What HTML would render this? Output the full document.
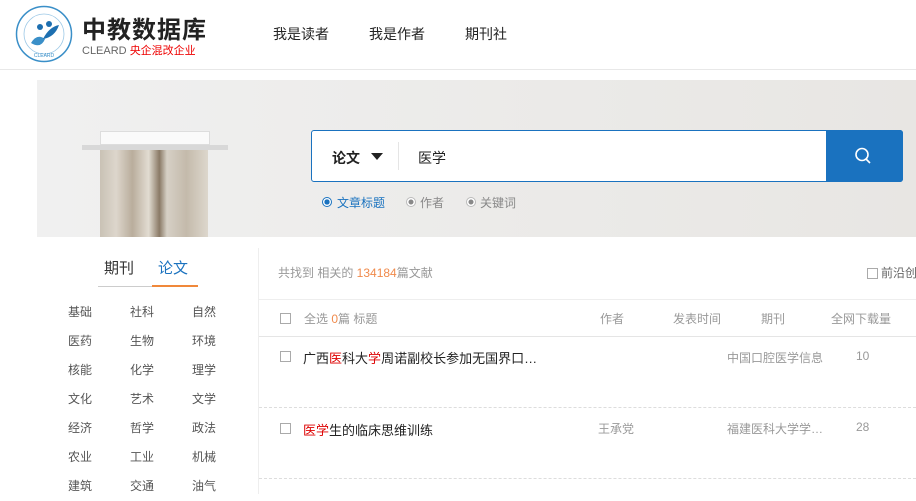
<!DOCTYPE html>
<html><head><meta charset="utf-8">
<style>
*{margin:0;padding:0;box-sizing:border-box}
body{width:916px;height:494px;overflow:hidden;background:#fff;font-family:"Liberation Sans","Noto Sans CJK SC",sans-serif;position:relative;color:#333}
.a{position:absolute;white-space:nowrap}
.cb{position:absolute;width:11px;height:11px;border:1px solid #aaa;background:#fff}
</style></head><body>
<svg class="a" style="left:15px;top:5px" width="58" height="58" viewBox="0 0 58 58">
<circle cx="29" cy="29" r="27.5" fill="#fff" stroke="#3a8fc8" stroke-width="1.5"/>
<circle cx="29" cy="29" r="20" fill="none" stroke="#9cc8e6" stroke-width="0.8"/>
<path d="M16 38 Q22 28 30 34 Q26 44 16 38Z" fill="#3a8fc8"/>
<path d="M28 34 Q34 22 44 20 Q40 32 28 34Z" fill="#1d6fb0"/>
<circle cx="25" cy="22" r="3" fill="#1d6fb0"/><circle cx="34" cy="19" r="3" fill="#1d6fb0"/>
<text x="29" y="52" font-size="5" fill="#3a8fc8" text-anchor="middle" font-family="Liberation Sans">CLEARD</text>
</svg>
<div class="a" style="left:82px;top:10px;font-size:24px;font-weight:bold;color:#222;letter-spacing:1px">中教数据库</div>
<div class="a" style="left:82px;top:42px;font-size:11px;color:#666">CLEARD <span style="color:#e00">央企混改企业</span></div>
<div class="a" style="left:273px;top:24px;font-size:14px;color:#222">我是读者</div>
<div class="a" style="left:369px;top:24px;font-size:14px;color:#222">我是作者</div>
<div class="a" style="left:465px;top:24px;font-size:14px;color:#222">期刊社</div>
<div class="a" style="left:0;top:69px;width:916px;height:1px;background:#e8e8e8"></div>
<div class="a" style="left:37px;top:80px;width:879px;height:157px;background:linear-gradient(90deg,#f0f0f0,#ebeae8 60%,#e8e6e3)"></div>
<div class="a" style="left:100px;top:131px;width:110px;height:14px;background:#fafafa;border:1px solid #ddd"></div>
<div class="a" style="left:82px;top:145px;width:146px;height:5px;background:#d8d8d8"></div>
<div class="a" style="left:100px;top:150px;width:108px;height:87px;background:linear-gradient(90deg,#c9c2b5,#ddd6cc 15%,#b9ad9c 30%,#e2dcd2 45%,#8a7a66 55%,#d6d0c6 62%,#c4baab 80%,#ddd7cd)"></div>
<div class="a" style="left:311px;top:130px;width:592px;height:52px;border:1px solid #1a72bf;border-radius:3px;background:#fff"></div>
<div class="a" style="left:826px;top:130px;width:77px;height:52px;background:#1a72bf;border-radius:0 3px 3px 0"></div>
<svg class="a" style="left:853px;top:146px" width="20" height="20" viewBox="0 0 20 20"><circle cx="9" cy="8.5" r="6" fill="none" stroke="#fff" stroke-width="1.6"/><path d="M13 13 L17 17" stroke="#fff" stroke-width="1.6"/></svg>
<div class="a" style="left:332px;top:148px;font-size:14px;font-weight:bold;color:#222">论文</div>
<svg class="a" style="left:371px;top:153px" width="12" height="8" viewBox="0 0 12 8"><path d="M0 0 H12 L6 7Z" fill="#222"/></svg>
<div class="a" style="left:398px;top:142px;width:1px;height:28px;background:#e5e5e5"></div>
<div class="a" style="left:418px;top:148px;font-size:14px;color:#222">医学</div>
<div class="a" style="left:322px;top:197px;width:10px;height:10px;border-radius:50%;border:1px solid #1a72bf;background:radial-gradient(#1a72bf 45%,#fff 50%)"></div>
<div class="a" style="left:337px;top:194px;font-size:12px;color:#1a72bf">文章标题</div>
<div class="a" style="left:406px;top:197px;width:10px;height:10px;border-radius:50%;border:1px solid #bbb;background:radial-gradient(#888 40%,#fff 48%)"></div>
<div class="a" style="left:420px;top:194px;font-size:12px;color:#888">作者</div>
<div class="a" style="left:466px;top:197px;width:10px;height:10px;border-radius:50%;border:1px solid #bbb;background:radial-gradient(#888 40%,#fff 48%)"></div>
<div class="a" style="left:480px;top:194px;font-size:12px;color:#888">关键词</div>
<div class="a" style="left:258px;top:248px;width:1px;height:246px;background:#eee"></div>
<div class="a" style="left:104px;top:257px;font-size:15px;color:#333">期刊</div>
<div class="a" style="left:158px;top:257px;font-size:15px;color:#1a72bf">论文</div>
<div class="a" style="left:98px;top:286px;width:54px;height:1px;background:#ccc"></div>
<div class="a" style="left:152px;top:285px;width:46px;height:2px;background:#f0883a"></div>
<div class="a" style="left:68px;top:298px;font-size:12px;color:#555;line-height:29px">基础<br>医药<br>核能<br>文化<br>经济<br>农业<br>建筑</div>
<div class="a" style="left:130px;top:298px;font-size:12px;color:#555;line-height:29px">社科<br>生物<br>化学<br>艺术<br>哲学<br>工业<br>交通</div>
<div class="a" style="left:192px;top:298px;font-size:12px;color:#555;line-height:29px">自然<br>环境<br>理学<br>文学<br>政法<br>机械<br>油气</div>
<div class="a" style="left:278px;top:264px;font-size:12px;color:#999">共找到 相关的 <span style="color:#f08a4b">134184</span>篇文献</div>
<div class="cb" style="left:867px;top:268px"></div>
<div class="a" style="left:881px;top:264px;font-size:12px;color:#666">前沿创</div>
<div class="a" style="left:259px;top:299px;width:657px;height:1px;background:#eee"></div>
<div class="cb" style="left:280px;top:313px"></div>
<div class="a" style="left:304px;top:310px;font-size:12px;color:#999">全选 <span style="color:#f08a4b">0</span>篇 标题</div>
<div class="a" style="left:600px;top:310px;font-size:12px;color:#999">作者</div>
<div class="a" style="left:673px;top:310px;font-size:12px;color:#999">发表时间</div>
<div class="a" style="left:761px;top:310px;font-size:12px;color:#999">期刊</div>
<div class="a" style="left:831px;top:310px;font-size:12px;color:#999">全网下载量</div>
<div class="a" style="left:259px;top:336px;width:657px;height:1px;background:#e5e5e5"></div>
<div class="cb" style="left:280px;top:351px"></div>
<div class="a" style="left:303px;top:348px;font-size:13px;color:#222">广西<span style="color:#d00">医</span>科大<span style="color:#d00">学</span>周诺副校长参加无国界口…</div>
<div class="a" style="left:727px;top:349px;font-size:12px;color:#999">中国口腔医学信息</div>
<div class="a" style="left:856px;top:349px;font-size:12px;color:#999">10</div>
<div class="a" style="left:259px;top:407px;width:657px;height:0;border-top:1px dashed #ddd"></div>
<div class="cb" style="left:280px;top:423px"></div>
<div class="a" style="left:303px;top:420px;font-size:13px;color:#222"><span style="color:#d00">医学</span>生的临床思维训练</div>
<div class="a" style="left:598px;top:420px;font-size:12px;color:#999">王承党</div>
<div class="a" style="left:727px;top:420px;font-size:12px;color:#999">福建医科大学学…</div>
<div class="a" style="left:856px;top:420px;font-size:12px;color:#999">28</div>
<div class="a" style="left:259px;top:478px;width:657px;height:0;border-top:1px dashed #ddd"></div>
</body></html>
